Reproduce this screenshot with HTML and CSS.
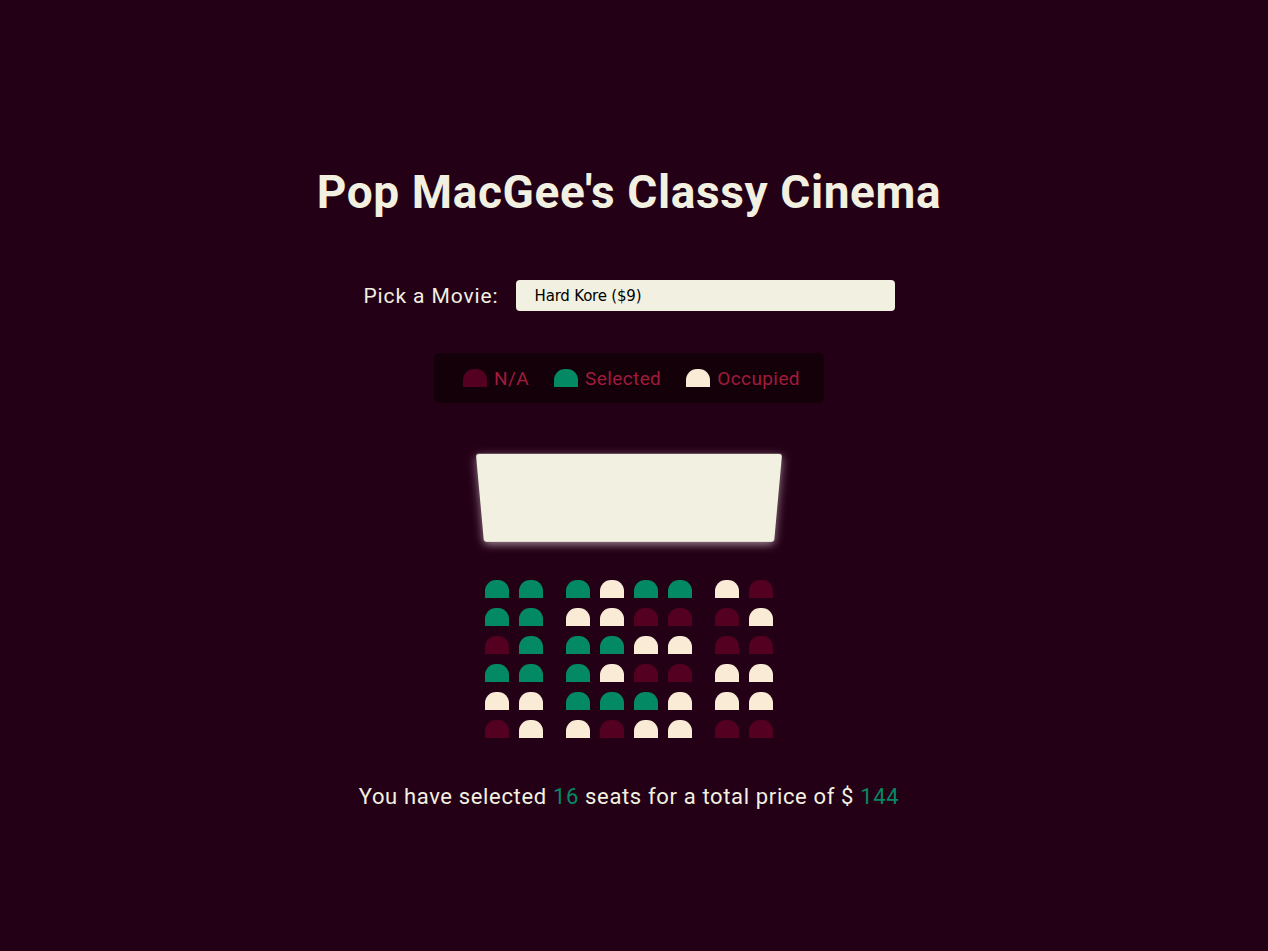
FILE: index.html
```html
<!DOCTYPE html>
<html>
<head>
<meta charset="utf-8">
<title>Pop MacGee's Classy Cinema</title>
<link rel="stylesheet" href="styles.css">
</head>
<body>
<div class="page">
  <h1 class="title">Pop MacGee's Classy Cinema</h1>
  <div class="picker">
    <label class="picker-label" for="movie">Pick a Movie:</label>
    <div class="select" id="movie">Hard Kore ($9)</div>
  </div>
  <ul class="legend">
    <li class="legend-item"><span class="seat na"></span><small>N/A</small></li>
    <li class="legend-item"><span class="seat sel"></span><small>Selected</small></li>
    <li class="legend-item"><span class="seat occ"></span><small>Occupied</small></li>
  </ul>
  <div class="hall">
    <div class="screen"></div>
    <div class="rows">
      <div class="row"><span class="seat sel"></span><span class="seat sel"></span><span class="seat sel"></span><span class="seat occ"></span><span class="seat sel"></span><span class="seat sel"></span><span class="seat occ"></span><span class="seat na"></span></div>
      <div class="row"><span class="seat sel"></span><span class="seat sel"></span><span class="seat occ"></span><span class="seat occ"></span><span class="seat na"></span><span class="seat na"></span><span class="seat na"></span><span class="seat occ"></span></div>
      <div class="row"><span class="seat na"></span><span class="seat sel"></span><span class="seat sel"></span><span class="seat sel"></span><span class="seat occ"></span><span class="seat occ"></span><span class="seat na"></span><span class="seat na"></span></div>
      <div class="row"><span class="seat sel"></span><span class="seat sel"></span><span class="seat sel"></span><span class="seat occ"></span><span class="seat na"></span><span class="seat na"></span><span class="seat occ"></span><span class="seat occ"></span></div>
      <div class="row"><span class="seat occ"></span><span class="seat occ"></span><span class="seat sel"></span><span class="seat sel"></span><span class="seat sel"></span><span class="seat occ"></span><span class="seat occ"></span><span class="seat occ"></span></div>
      <div class="row"><span class="seat na"></span><span class="seat occ"></span><span class="seat occ"></span><span class="seat na"></span><span class="seat occ"></span><span class="seat occ"></span><span class="seat na"></span><span class="seat na"></span></div>
    </div>
  </div>
  <p class="summary">You have selected <span class="num">16</span> seats for a total price of $ <span class="num">144</span></p>
</div>
</body>
</html>
```

FILE: styles.css
```css
html, body {
  margin: 0;
  padding: 0;
  background: #240017;
}
body {
  font-family: Roboto, "Liberation Sans", sans-serif;
  color: #f2f0e0;
}
.page {
  width: 1258px;
  display: flex;
  flex-direction: column;
  align-items: center;
  padding-top: 165px;
}
.title {
  margin: 0;
  font-size: 46px;
  line-height: 55px;
  font-weight: 700;
  letter-spacing: 0.6px;
  color: #f2f0e0;
}
.picker {
  margin-top: 60px;
  display: flex;
  align-items: center;
  gap: 17px;
}
.picker-label {
  font-size: 21px;
  letter-spacing: 0.9px;
  color: #f2f0e0;
}
.select {
  width: 379px;
  height: 31px;
  box-sizing: border-box;
  padding-left: 19px;
  display: flex;
  align-items: center;
  background: #f2f0e0;
  border-radius: 4px;
  color: #000;
  font-family: "DejaVu Sans", Tahoma, sans-serif;
  font-size: 15px;
  letter-spacing: -0.2px;
}
.legend {
  list-style: none;
  margin: 42px 0 0;
  width: 390px;
  height: 50px;
  box-sizing: border-box;
  padding: 0 0 0 5px;
  display: flex;
  justify-content: center;
  align-items: center;
  gap: 25px;
  background: #130009;
  border-radius: 5px;
}
.legend-item {
  display: flex;
  align-items: center;
  gap: 7px;
}
.legend-item .seat {
  margin: 0;
}
.legend-item small {
  font-size: 19px;
  letter-spacing: 0.4px;
  color: #a01b3c;
}
.seat {
  display: inline-block;
  width: 24px;
  height: 18px;
  margin: 5px;
  border-top-left-radius: 11px;
  border-top-right-radius: 11px;
  background: #540021;
}
.seat.na { background: #540021; }
.seat.sel { background: #038a64; }
.seat.occ { background: #faebd7; }
.hall {
  margin-top: 50px;
  display: flex;
  flex-direction: column;
  align-items: center;
}
.screen {
  width: 298px;
  height: 92px;
  background: #f2f0e0;
  border-radius: 3px;
  transform: perspective(500px) rotateX(-17deg);
  box-shadow: 0 3px 10px rgba(255, 245, 245, 0.55);
}
.rows {
  margin-top: 30px;
  display: flex;
  flex-direction: column;
}
.row {
  display: flex;
}
.row .seat:nth-of-type(2) {
  margin-right: 18px;
}
.row .seat:nth-last-of-type(2) {
  margin-left: 18px;
}
.summary {
  margin: 41px 0 0;
  font-size: 22px;
  letter-spacing: 0.65px;
  color: #f2f0e0;
}
.num {
  color: #038a64;
}
```
